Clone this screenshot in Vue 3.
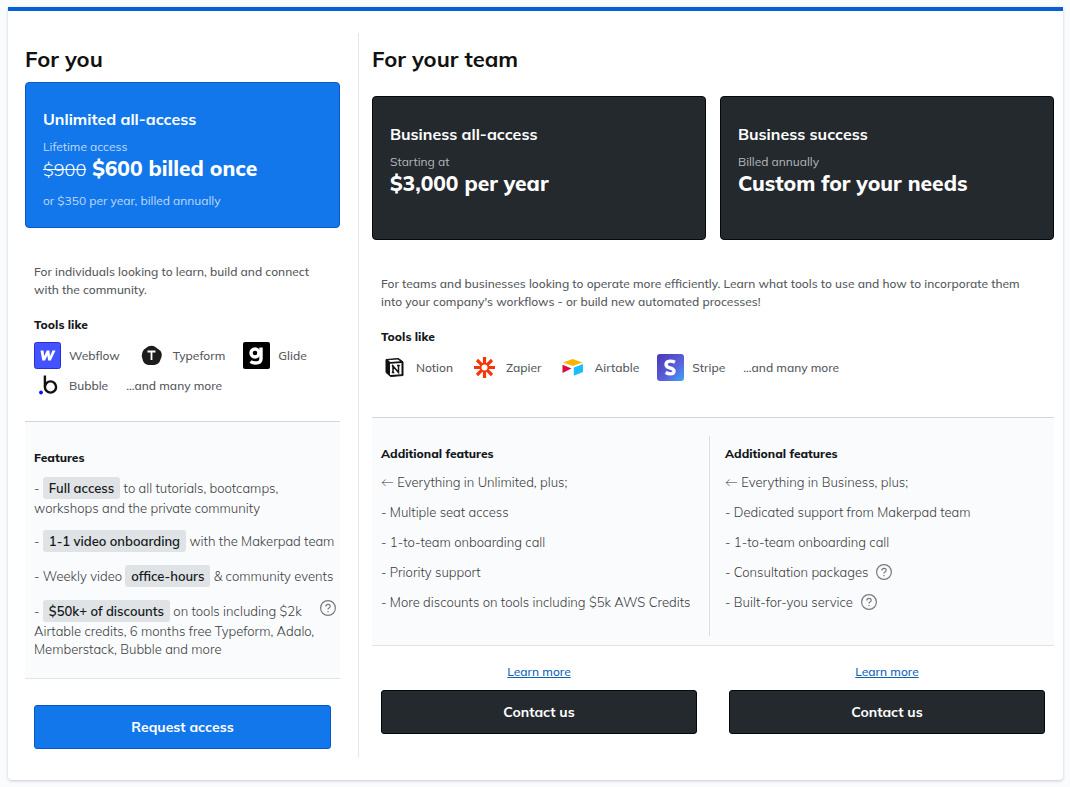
<template>
  <main class="pricing">
    <section class="plan plan-you">
      <h2 class="plan-title">For you</h2>
      <div class="offer offer-blue">
        <h3 class="offer-name">Unlimited all-access</h3>
        <p class="offer-note">Lifetime access</p>
        <p class="offer-price"><s>$900</s> $600 billed once</p>
        <p class="offer-note offer-alt">or $350 per year, billed annually</p>
      </div>

      <div class="intro">
        <p>For individuals looking to learn, build and connect with the community.</p>
        <h4 class="label">Tools like</h4>
        <ul class="tools">
          <li>
            <svg class="logo" viewBox="0 0 27 27" aria-hidden="true">
              <rect x="0.5" y="0.5" width="26" height="26" rx="2" fill="#4353ff" stroke="#2430d8" />
              <path d="M6.500 8.500h3l.7 5.700 2.500-5.700h2.700l.6 5.700 2.500-5.700h3l-4.700 10h-2.700l-.7-5-2.300 5H8.300z" fill="#fff" />
            </svg>
            Webflow
          </li>
          <li>
            <svg class="logo" viewBox="0 0 27 27" aria-hidden="true">
              <path d="M10.500 4.300Q14 2.800 17 4.700L22 8.500Q24.500 11 23.500 15L21.500 20Q20 22.500 16.500 23H10.500Q6.500 22.500 5 19L3.700 14Q3.500 10 6 7.500Z" fill="#1c1c1c" />
              <path d="M9.500 9.500h8M13.500 9.500v8.500" fill="none" stroke="#fff" stroke-width="1.800" />
            </svg>
            Typeform
          </li>
          <li>
            <svg class="logo" viewBox="0 0 27 27" aria-hidden="true">
              <rect width="27" height="27" rx="2" fill="#000" />
              <circle cx="12" cy="11" r="4" fill="none" stroke="#fff" stroke-width="3.400" />
              <path d="M18 5.500v11.500q0 4-5.500 4-3 0-5-1.500" fill="none" stroke="#fff" stroke-width="3.400" />
            </svg>
            Glide
          </li>
          <li>
            <svg class="logo" viewBox="0 0 27 27" aria-hidden="true">
              <circle cx="16.500" cy="15" r="5.600" fill="none" stroke="#111" stroke-width="2.400" />
              <path d="M10.900 3.500v11.500" fill="none" stroke="#111" stroke-width="2.400" />
              <circle cx="7" cy="20.500" r="1.900" fill="#0d0dff" />
            </svg>
            Bubble
          </li>
          <li>...and many more</li>
        </ul>
      </div>

      <div class="features features-you">
        <h4 class="label">Features</h4>
        <ul class="feature-list">
          <li>- <mark>Full access</mark> to all tutorials, bootcamps, workshops and the private community</li>
          <li>- <mark>1-1 video onboarding</mark> with the Makerpad team</li>
          <li>- Weekly video <mark>office-hours</mark> &amp; community events</li>
          <li class="with-help">
            <span>- <mark>$50k+ of discounts</mark> on tools including $2k Airtable credits, 6 months free Typeform, Adalo, Memberstack, Bubble and more</span>
            <button type="button" class="help" aria-label="About the discounts">
              <svg viewBox="0 0 16 16" aria-hidden="true">
                <circle cx="8" cy="8" r="7.400" />
                <path d="M5.800 6.500Q5.900 4.400 8 4.400T10.200 6.300Q10.200 7.400 9 8.100 8 8.700 8 9.500M8 11v1.200" />
              </svg>
            </button>
          </li>
        </ul>
      </div>

      <div class="actions-you">
        <button type="button" class="cta cta-blue">Request access</button>
      </div>
    </section>

    <section class="plan plan-team">
      <h2 class="plan-title">For your team</h2>
      <div class="offers">
        <div v-for="offer in offers" :key="offer.name" class="offer offer-dark">
          <h3 class="offer-name">{{ offer.name }}</h3>
          <p class="offer-note">{{ offer.note }}</p>
          <p class="offer-price">{{ offer.price }}</p>
        </div>
      </div>

      <div class="intro">
        <p>
          For teams and businesses looking to operate more efficiently. Learn what tools to use and how to incorporate them
          into your company's workflows - or build new automated processes!
        </p>
        <h4 class="label">Tools like</h4>
        <ul class="tools">
          <li>
            <svg class="logo" viewBox="0 0 27 27" aria-hidden="true">
              <path d="M5 5.500 17.500 4.500 22 7.800V21.500L9.500 22.500 5 18.500Z" fill="#111" stroke="#111" stroke-width="1" stroke-linejoin="round" />
              <path d="M7 6.300 16.800 5.600 19.200 7.200 9.300 7.900ZM9 9.800 20.500 9V20.200L9 21Z" fill="#fff" />
              <path d="M12 18.500V12l5.500 6.500V11.500M10.800 12h2M16 11.500h2.800M10.800 18.500h2.500" fill="none" stroke="#111" stroke-width="1.500" />
            </svg>
            Notion
          </li>
          <li>
            <svg class="logo" viewBox="0 0 27 27" aria-hidden="true">
              <path d="M13.500 3v6.500M13.500 17.500V24M3 13.500h6.500M17.500 13.500H24M6 6l4.800 4.800M16.200 16.200 21 21M21 6l-4.800 4.800M10.800 16.200 6 21" stroke="#f5360b" stroke-width="3.200" />
              <circle cx="13.500" cy="13.500" r="3.900" fill="#fff" stroke="#f5360b" stroke-width="1.800" />
            </svg>
            Zapier
          </li>
          <li>
            <svg class="logo" viewBox="0 0 27 27" aria-hidden="true">
              <path d="M4 8.400 13.500 5 23.500 8.400 14 12Z" fill="#fcb400" />
              <path d="M14.800 13.600 24 10V18L14.800 21.800Z" fill="#18bfff" />
              <path d="M3.500 10.800 12.500 14.500 3.500 19Z" fill="#d90b46" />
            </svg>
            Airtable
          </li>
          <li>
            <svg class="logo" viewBox="0 0 27 27" aria-hidden="true">
              <defs>
                <linearGradient id="stripe-fill" x1="0" y1="0" x2="1" y2="1">
                  <stop offset="0" stop-color="#4a36b8" />
                  <stop offset="0.600" stop-color="#5b62dc" />
                  <stop offset="1" stop-color="#3aa8f2" />
                </linearGradient>
              </defs>
              <rect width="27" height="27" rx="3" fill="url(#stripe-fill)" />
              <path d="M18 8.200Q15.500 7 13 7.100C7.800 7.500 8 12.600 12 13.700 15.500 14.700 17.300 15.300 17 17.300 16.200 21 11.500 20 8.600 18.500" fill="none" stroke="#fff" stroke-width="3.400" />
            </svg>
            Stripe
          </li>
          <li>...and many more</li>
        </ul>
      </div>

      <div class="features features-team">
        <div v-for="group in groups" :key="group.first" class="feature-group">
          <h4 class="label">Additional features</h4>
          <ul class="feature-list">
            <li>← {{ group.first }}</li>
            <li v-for="item in group.items" :key="item.text" :class="{ 'with-help-inline': item.help }">
              - {{ item.text }}
              <button v-if="item.help" type="button" class="help" :aria-label="`About ${item.text}`">
                <svg viewBox="0 0 16 16" aria-hidden="true">
                  <circle cx="8" cy="8" r="7.400" />
                  <path d="M5.800 6.500Q5.900 4.400 8 4.400T10.200 6.300Q10.200 7.400 9 8.100 8 8.700 8 9.500M8 11v1.200" />
                </svg>
              </button>
            </li>
          </ul>
        </div>
      </div>

      <div class="offers actions-team">
        <div v-for="offer in offers" :key="offer.name" class="action">
          <a href="#" class="learn-more">Learn more</a>
          <button type="button" class="cta cta-dark">Contact us</button>
        </div>
      </div>
    </section>
  </main>
</template>

<script setup>
const offers = [
  { name: 'Business all-access', note: 'Starting at', price: '$3,000 per year' },
  { name: 'Business success', note: 'Billed annually', price: 'Custom for your needs' }
];

const groups = [
  {
    first: 'Everything in Unlimited, plus;',
    items: [
      { text: 'Multiple seat access' },
      { text: '1-to-team onboarding call' },
      { text: 'Priority support' },
      { text: 'More discounts on tools including $5k AWS Credits' }
    ]
  },
  {
    first: 'Everything in Business, plus;',
    items: [
      { text: 'Dedicated support from Makerpad team' },
      { text: '1-to-team onboarding call' },
      { text: 'Consultation packages', help: true },
      { text: 'Built-for-you service', help: true }
    ]
  }
];
</script>

<style>
body {
  background: #fafbfd;
}
</style>

<style scoped>
.pricing {
  display: grid;
  grid-template-columns: minmax(0, 1fr) minmax(0, 2fr);
  margin: 7px 7px 7px 8px;
  padding: 22px 5px 22px 0;
  border-top: 4px solid #0561d3;
  border-radius: 0 0 4px 4px;
  background: #fff;
  box-shadow: 0 1px 3px rgba(20, 30, 50, 0.22);
  color: #55585c;
  font-family: Mulish, Muli, Lato, "Liberation Sans", sans-serif;
  font-size: 12px;
  font-weight: 500;
  line-height: 18px;
}

h2,
h3,
h4,
p,
ul {
  margin: 0;
  padding: 0;
}

ul {
  list-style: none;
}

.plan-you {
  padding: 0 18px 0 17px;
}

.plan-team {
  padding: 0 4px 0 13px;
  border-left: 1px solid #e4e6e8;
}

.plan-title {
  padding-top: 12px;
  color: #111;
  font-size: 22px;
  font-weight: 700;
  line-height: 28px;
}

.offer {
  box-sizing: border-box;
  padding: 26px 17px 17px;
  border: 1px solid;
  border-radius: 4px;
  color: #fff;
}

.plan-you .offer {
  margin-top: 9px;
}

.offer-blue {
  border-color: #0b57c6;
  background: #1277eb;
}

.offer-dark {
  min-height: 144px;
  padding-top: 27px;
  border-color: #05080c;
  background: #24292e;
}

.offer-name {
  font-size: 16px;
  font-weight: 700;
  line-height: 20px;
}

.offer-note {
  margin-top: 9px;
  color: #b4b8bc;
  font-weight: 400;
}

.offer-blue .offer-note {
  color: #c0daf9;
}

.offer-price {
  font-size: 21px;
  font-weight: 800;
  line-height: 24px;
}

.offer-price s {
  font-size: 18px;
  font-weight: 300;
}

.offer-blue .offer-alt {
  margin-top: 10px;
}

.offers {
  display: grid;
  grid-template-columns: repeat(2, minmax(0, 1fr));
  gap: 14px;
}

.plan-team > .offers:not(.actions-team) {
  margin-top: 23px;
}

.intro {
  padding: 35px 9px 22px;
}

.plan-team .intro {
  padding-right: 18px;
  padding-bottom: 36px;
}

.label {
  color: #15181b;
  font-size: 12px;
  font-weight: 800;
}

.intro .label {
  margin-top: 17px;
}

.tools {
  display: flex;
  flex-wrap: wrap;
  gap: 3px 18px;
  margin-top: 8px;
}

.tools li {
  display: flex;
  align-items: center;
  gap: 8px;
}

.logo {
  display: block;
  width: 27px;
  height: 27px;
}

.features {
  border-top: 1px solid #d3d7da;
  border-bottom: 1px solid #e2e5e7;
  background: #fafbfd;
}

.features-you {
  padding: 27px 4px 20px 9px;
}

.features-team {
  display: grid;
  grid-template-columns: repeat(2, minmax(0, 1fr));
  padding: 18px 8px 9px 0;
}

.feature-group {
  padding: 9px 9px 25px;
}

.feature-group + .feature-group {
  padding-left: 15px;
  border-left: 1px solid #dcdfe2;
}

.feature-list {
  display: grid;
  gap: 12px;
  margin-top: 10px;
  color: #3a3d41;
  font-size: 13px;
  font-weight: 300;
}

.features-you .feature-list {
  gap: 13px;
}

mark {
  display: inline-block;
  padding: 2px 6px;
  border-radius: 3px;
  background: #dfe3e5;
  color: #15181b;
  font-weight: 600;
}

.with-help {
  display: flex;
  justify-content: space-between;
}

.with-help-inline {
  display: flex;
  align-items: center;
  gap: 8px;
}

.help {
  flex: none;
  width: 16px;
  height: 16px;
  padding: 0;
  border: 0;
  background: none;
  cursor: pointer;
}

.help svg {
  display: block;
  width: 16px;
  height: 16px;
  fill: none;
  stroke: #777b7f;
  stroke-width: 1.2;
}

.actions-you {
  padding: 26px 9px 9px;
}

.actions-team {
  margin-top: 17px;
}

.action {
  display: flex;
  flex-direction: column;
  align-items: center;
  gap: 9px;
  padding: 0 9px;
}

.learn-more {
  color: #0c62b8;
}

.cta {
  width: 100%;
  height: 44px;
  border: 1px solid;
  border-radius: 3px;
  color: #fff;
  font-family: inherit;
  font-size: 14px;
  font-weight: 700;
  cursor: pointer;
}

.cta-blue {
  border-color: #0b57c6;
  background: #1277eb;
}

.cta-dark {
  border-color: #05080c;
  background: #24292e;
}
</style>
